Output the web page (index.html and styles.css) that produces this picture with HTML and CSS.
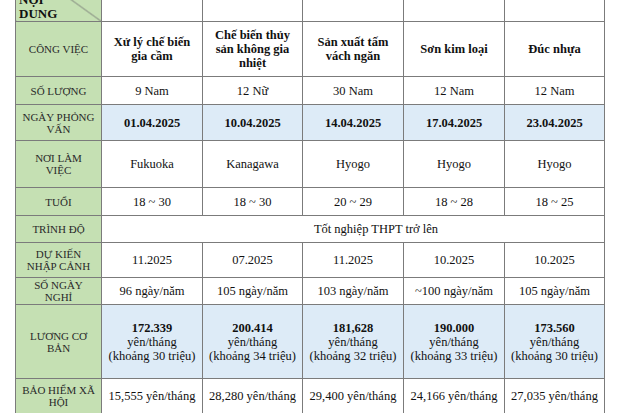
FILE: index.html
```html
<!DOCTYPE html>
<html lang="vi">
<head>
<meta charset="utf-8">
<title>Bảng đơn hàng</title>
<link rel="stylesheet" href="styles.css">
</head>
<body>
<table class="grid">
  <colgroup>
    <col class="c-label">
    <col class="c-job">
    <col class="c-job2">
    <col class="c-job">
    <col class="c-job">
    <col class="c-job2">
  </colgroup>
  <tbody>
    <tr class="r-head">
      <th class="corner"><span class="corner-text">NỘI<br>DUNG</span></th>
      <th class="blank"></th><th class="blank"></th><th class="blank"></th><th class="blank"></th><th class="blank"></th>
    </tr>
    <tr class="r-job">
      <th class="label">CÔNG VIỆC</th>
      <td class="b">Xử lý chế biến gia cầm</td>
      <td class="b">Chế biến thủy sản không gia nhiệt</td>
      <td class="b">Sản xuất tấm vách ngăn</td>
      <td class="b">Sơn kim loại</td>
      <td class="b">Đúc nhựa</td>
    </tr>
    <tr class="r-qty">
      <th class="label">SỐ LƯỢNG</th>
      <td>9 Nam</td><td>12 Nữ</td><td>30 Nam</td><td>12 Nam</td><td>12 Nam</td>
    </tr>
    <tr class="r-date blue">
      <th class="label">NGÀY PHỎNG VẤN</th>
      <td class="b">01.04.2025</td><td class="b">10.04.2025</td><td class="b">14.04.2025</td><td class="b">17.04.2025</td><td class="b">23.04.2025</td>
    </tr>
    <tr class="r-place">
      <th class="label">NƠI LÀM<br>VIỆC</th>
      <td>Fukuoka</td><td>Kanagawa</td><td>Hyogo</td><td>Hyogo</td><td>Hyogo</td>
    </tr>
    <tr class="r-age">
      <th class="label">TUỔI</th>
      <td>18 ~ 30</td><td>18 ~ 30</td><td>20 ~ 29</td><td>18 ~ 28</td><td>18 ~ 25</td>
    </tr>
    <tr class="r-edu">
      <th class="label">TRÌNH ĐỘ</th>
      <td class="merged" colspan="5">Tốt nghiệp THPT trở lên</td>
    </tr>
    <tr class="r-entry">
      <th class="label">DỰ KIẾN NHẬP CẢNH</th>
      <td>11.2025</td><td>07.2025</td><td>11.2025</td><td>10.2025</td><td>10.2025</td>
    </tr>
    <tr class="r-off">
      <th class="label">SỐ NGÀY NGHỈ</th>
      <td>96 ngày/năm</td><td>105 ngày/năm</td><td>103 ngày/năm</td><td>~100 ngày/năm</td><td>105 ngày/năm</td>
    </tr>
    <tr class="r-pay blue">
      <th class="label">LƯƠNG CƠ BẢN</th>
      <td><strong>172.339</strong><br>yên/tháng<br>(khoảng 30 triệu)</td>
      <td><strong>200.414</strong><br>yên/tháng<br>(khoảng 34 triệu)</td>
      <td><strong>181,628</strong><br>yên/tháng<br>(khoảng 32 triệu)</td>
      <td><strong>190.000</strong><br>yên/tháng<br>(khoảng 33 triệu)</td>
      <td><strong>173.560</strong><br>yên/tháng<br>(khoảng 30 triệu)</td>
    </tr>
    <tr class="r-ins">
      <th class="label">BẢO HIỂM XÃ HỘI</th>
      <td>15,555 yên/tháng</td><td>28,280 yên/tháng</td><td>29,400 yên/tháng</td><td>24,166 yên/tháng</td><td>27,035 yên/tháng</td>
    </tr>
    <tr class="r-next">
      <th class="label">&nbsp;</th>
      <td></td><td></td><td></td><td></td><td></td>
    </tr>
  </tbody>
</table>
</body>
</html>
```

FILE: styles.css
```css
html, body {
  margin: 0;
  padding: 0;
  background: #ffffff;
  overflow: hidden;
}

body {
  font-family: "Liberation Serif", "Times New Roman", serif;
  color: #111;
}

.grid {
  margin: -41px 0 0 15px;
  border-collapse: collapse;
  table-layout: fixed;
  width: 590px;
  font-size: 12.5px;
  line-height: 14px;
}

.c-label { width: 86px; }
.c-job { width: 101px; }
.c-job2 { width: 100px; }

.grid th,
.grid td {
  border: 1px solid #7b7b7b;
  padding: 0 4px;
  text-align: center;
  vertical-align: middle;
  font-weight: normal;
}

.grid .label {
  background: #c5e0b3;
  font-size: 11px;
  line-height: 12px;
  color: #2a2a2a;
  text-transform: uppercase;
  padding: 0 5px;
}

.grid .blank {
  background: #ffffff;
}

.grid .b,
.grid strong {
  font-weight: bold;
}

.grid .blue td {
  background: #ddebf7;
}

.grid .corner {
  background:
    linear-gradient(to top right, transparent calc(50% - 0.7px), #6f6f6f 50%, transparent calc(50% + 0.7px)),
    #c5e0b3;
  text-align: left;
  vertical-align: bottom;
  padding: 0 3px;
}

.corner-text {
  display: block;
  font-size: 13px;
  line-height: 14px;
  font-weight: bold;
  color: #111;
  padding-bottom: 0;
}

.r-head { height: 62px; }
.r-job { height: 55px; }
.r-qty { height: 28px; }
.r-date { height: 36px; }
.r-place { height: 47px; }
.r-age { height: 28px; }
.r-edu { height: 27px; }
.r-entry { height: 35px; }
.r-off { height: 27px; }
.r-pay { height: 74px; }
.r-ins { height: 35px; }
.r-next { height: 30px; }

.grid .merged {
  padding-left: 50px;
}
```
